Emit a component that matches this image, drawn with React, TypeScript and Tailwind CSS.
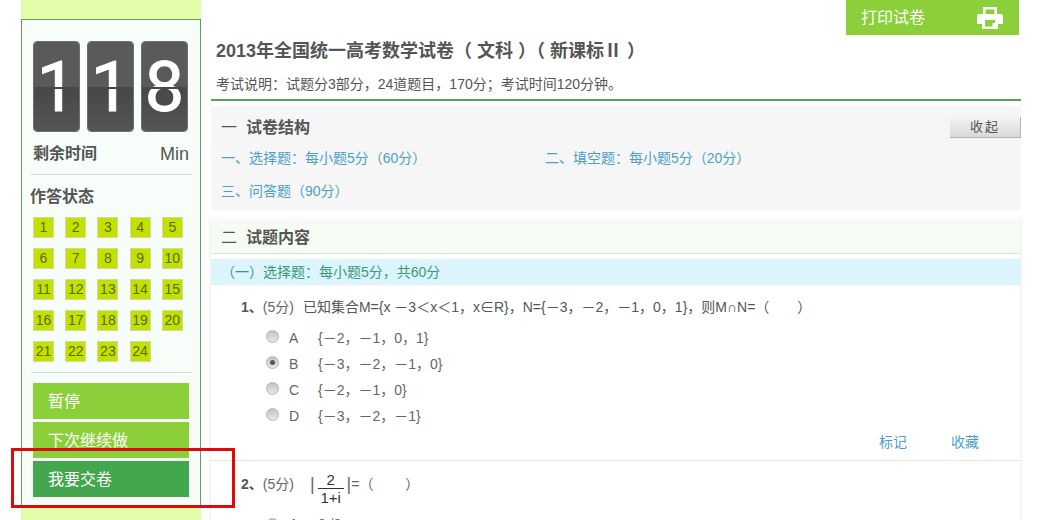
const font = { fontFamily: '"Liberation Sans", "Noto Sans CJK SC", sans-serif' };

const digits = ["1", "1", "8"];
const nums = Array.from({ length: 24 }, (_, i) => i + 1);
const options = [
  { key: "A", text: "{－2，－1，0，1}" },
  { key: "B", text: "{－3，－2，－1，0}", checked: true },
  { key: "C", text: "{－2，－1，0}" },
  { key: "D", text: "{－3，－2，－1}" },
];

function Radio({ checked }: { checked?: boolean }) {
  return (
    <span className="w-[13px] h-[13px] rounded-full border border-[#b4b4b4] bg-gradient-to-b from-[#c4c4c4] to-[#e8e8e8] flex items-center justify-center shrink-0">
      {checked && <span className="w-[5px] h-[5px] rounded-full bg-[#555]" />}
    </span>
  );
}

function FlipCard({ value }: { value: string }) {
  return (
    <div className="relative w-[47px] h-[91px] rounded-[4px] border border-[#6f6f6f] overflow-hidden flex flex-col">
      <div className="h-[45px] bg-[#5a5a5a]" />
      <div className="flex-1 bg-gradient-to-b from-[#474747] to-[#555555]" />
      <span className="absolute inset-0 flex items-center justify-center text-white font-['Roboto'] text-[70px] leading-none [-webkit-text-stroke:1px_white]">{value}</span>
      <div className="absolute left-0 right-0 top-[45px] h-[2px] bg-[#484848]" />
    </div>
  );
}

function Sidebar() {
  return (
    <aside className="w-[180px] ml-[21px] shrink-0 h-[520px] bg-[#e2fdaa] pt-[19px] flex flex-col">
      <div className="h-[488px] border border-[#5e9f5e] bg-[#f7fdf8] px-[11px] pt-[21px]">
        <div className="flex gap-[7px]">
          {digits.map((d, i) => (
            <FlipCard key={i} value={d} />
          ))}
        </div>
        <div className="flex justify-between items-center h-[24px] mt-[10px] w-[156px] text-[#555]">
          <span className="text-[16px] font-bold">剩余时间</span>
          <span className="text-[18px]">Min</span>
        </div>
        <div className="border-t border-[#d4dcd6] mt-[8px] -mx-[2px] w-[161px]" />
        <div className="text-[16px] font-bold text-[#555] mt-[11px] -ml-[3px] leading-[22px]">作答状态</div>
        <div className="grid grid-cols-5 gap-x-[11px] gap-y-[10px] mt-[9px] w-[150px]">
          {nums.map((n) => (
            <div key={n} className="w-[21px] h-[21px] bg-[#c4e000] border border-[#d0dba0] text-[#5a6b14] text-[14px] flex items-center justify-center">
              {n}
            </div>
          ))}
        </div>
        <div className="border-t border-[#d8dcdc] mt-[10px] -mx-[2px] w-[161px]" />
        <div className="flex flex-col gap-[3px] mt-[10px]">
          <div className="w-[156px] h-[36px] bg-[#8bcf3a] text-white text-[16px] pl-[15px] pt-[2px] flex items-center">暂停</div>
          <div className="w-[156px] h-[36px] bg-[#8bcf3a] text-white text-[16px] pl-[15px] pt-[2px] flex items-center">下次继续做</div>
          <div className="w-[156px] h-[36px] bg-[#43a74d] text-white text-[16px] pl-[15px] pt-[2px] flex items-center">我要交卷</div>
        </div>
      </div>
    </aside>
  );
}

function SectionTitle({ no, title }: { no: string; title: string }) {
  return (
    <div className="flex items-center text-[16px] text-[#555] leading-[22px]">
      <span className="w-[25px] font-normal">{no}</span>
      <span className="font-bold">{title}</span>
    </div>
  );
}

export default function App() {
  return (
    <div style={font} className="relative w-[1039px] h-[520px] overflow-hidden bg-white flex">
      <Sidebar />
      <main className="ml-[10px] w-[810px] shrink-0">
        <div className="flex justify-end pr-[2px]">
          <div className="w-[173px] h-[35px] bg-[#8bcf3a] text-white text-[16px] pl-[15px] pr-[16px] flex items-center justify-between">
            <span>打印试卷</span>
            <svg width="26" height="24" viewBox="0 0 26 24" fill="none">
              <path fillRule="evenodd" clipRule="evenodd" fill="#fff" d="M6 1h14v7h4a2 2 0 0 1 2 2v8h-5v5H5v-5H0v-8a2 2 0 0 1 2-2h4zM8.500 3.500V8h9V3.500zM8 14v6.500h7.500V17H18v-3z" />
            </svg>
          </div>
        </div>
        <h1 className="text-[18px] font-bold text-[#555] leading-[24px] mt-[4px] ml-[5px] whitespace-pre">2013年全国统一高考数学试卷（ 文科 ）（ 新课标Ⅱ ）</h1>
        <div className="border-b-2 border-[#52a552] h-[38px] pt-[11px] pl-[5px] text-[14px] leading-[20px] text-[#555]">
          考试说明：试题分3部分，24道题目，170分；考试时间120分钟。
        </div>
        <section className="mt-[5px] h-[104px] bg-[#f6f6f6] pl-[10px] pt-[11px] relative">
          <SectionTitle no="一" title="试卷结构" />
          <div className="absolute right-0 top-[11px] w-[71px] h-[21px] bg-gradient-to-b from-[#f4f4f4] to-[#d8d8d8] border-r border-b border-[#b5b5b5] text-[13px] text-[#555] tracking-[2px] flex items-center justify-center">
            收起
          </div>
          <div className="grid grid-cols-[324px_1fr] gap-y-[13px] mt-[9px] text-[14px] leading-[20px] text-[#4b9fc9]">
            <span>一、选择题：每小题5分（60分）</span>
            <span>二、填空题：每小题5分（20分）</span>
            <span>三、问答题（90分）</span>
          </div>
        </section>
        <section className="mt-[9px] mr-[1px] h-[301px] shadow-[-2px_0_0_#f5f6f6,2px_0_0_#f3f4f4]">
          <div className="h-[35px] bg-[#f6fcf4] border-b border-[#dbe5d5] pl-[10px] pt-[3px] flex items-center">
            <SectionTitle no="二" title="试题内容" />
          </div>
          <div className="mt-[5px] h-[26px] bg-[#dcf5fd] text-[14px] text-[#3a9a78] pl-[10px] flex items-center">
            （一）选择题：每小题5分，共60分
          </div>
          <div className="h-[176px] border-b border-[#e2e4e4] pt-[12px]">
            <div className="flex items-center h-[20px] pl-[30px] text-[14px] text-[#666]">
              <b className="text-[#555]">1、</b>
              <span>(5分)</span>
              <span className="ml-[9px] text-[#555] whitespace-pre">已知集合M={"{"}x －3＜x＜1，x∈R{"}"}，N={"{"}－3，－2，－1，0，1{"}"}，则M∩N=（　　）</span>
            </div>
            <div className="flex flex-col gap-[6px] mt-[9px] pl-[55px]">
              {options.map((o) => (
                <div key={o.key} className="flex items-center h-[20px] text-[14px] text-[#666]">
                  <Radio checked={o.checked} />
                  <span className="ml-[10px] w-[29px] pt-[4px]">{o.key}</span>
                  <span className="pt-[4px]">{o.text}</span>
                </div>
              ))}
            </div>
            <div className="flex justify-end gap-[44px] pr-[41px] mt-[8px] text-[14px] leading-[20px] text-[#4b9fc9]">
              <span>标记</span>
              <span>收藏</span>
            </div>
          </div>
          <div className="flex items-center h-[44px] mt-[1px] pl-[30px] text-[14px] text-[#666]">
            <b className="text-[#555]">2、</b>
            <span>(5分)</span>
            <span className="ml-[16px] text-[18px] leading-none">|</span>
            <span className="inline-flex flex-col items-center text-[15px] leading-[17px] text-[#333] mx-[3px] mt-[8px]">
              <span className="border-b border-[#333] w-[26px] text-center">2</span>
              <span>1+i</span>
            </span>
            <span className="text-[18px] leading-none">|</span>
            <span className="whitespace-pre">=（　　 ）</span>
          </div>
          <div className="flex items-center h-[20px] mt-[8px] pl-[55px] text-[14px] text-[#666]">
            <Radio />
            <span className="ml-[10px] w-[29px]">A</span>
            <span>2√2</span>
          </div>
        </section>
      </main>
      {/* red annotation drawn over the page */}
      <div className="absolute left-[11px] top-[448px] w-[224px] h-[60px] border-[3px] border-[#df0a0a]" />
    </div>
  );
}
